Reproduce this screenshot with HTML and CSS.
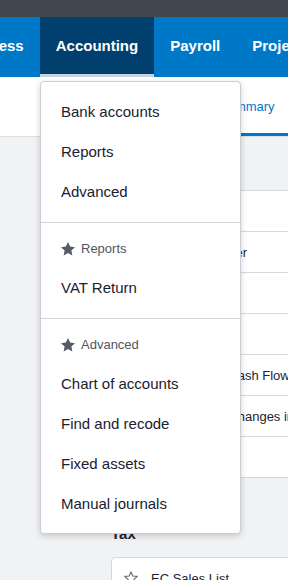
FILE: index.html
```html
<!DOCTYPE html>
<html lang="en">
<head>
<meta charset="utf-8">
<title>Accounting menu</title>
<link rel="stylesheet" href="styles.css">
</head>
<body>
<div class="topbar"></div>
<nav class="nav">
  <a class="tab tab-first">Business</a>
  <a class="tab active">Accounting</a>
  <a class="tab">Payroll</a>
  <a class="tab">Projects</a>
</nav>
<div class="subnav">
  <a class="subtab active">Summary</a>
</div>
<main class="content">
  <section class="group">
    <h2 class="group-title">Accounting</h2>
    <ul class="card">
      <li class="row"><svg class="row-star" viewBox="0 0 24 24"><path d="M12 2.8l2.7 6.2 6.8.6-5.2 4.5 1.6 6.6L12 17.2l-5.9 3.5 1.6-6.6-5.2-4.5 6.8-.6z"/></svg>Balance Sheet</li>
      <li class="row"><svg class="row-star" viewBox="0 0 24 24"><path d="M12 2.8l2.7 6.2 6.8.6-5.2 4.5 1.6 6.6L12 17.2l-5.9 3.5 1.6-6.6-5.2-4.5 6.8-.6z"/></svg>Budget Manager</li>
      <li class="row"><svg class="row-star" viewBox="0 0 24 24"><path d="M12 2.8l2.7 6.2 6.8.6-5.2 4.5 1.6 6.6L12 17.2l-5.9 3.5 1.6-6.6-5.2-4.5 6.8-.6z"/></svg>Journal Report</li>
      <li class="row"><svg class="row-star" viewBox="0 0 24 24"><path d="M12 2.8l2.7 6.2 6.8.6-5.2 4.5 1.6 6.6L12 17.2l-5.9 3.5 1.6-6.6-5.2-4.5 6.8-.6z"/></svg>Profit and Loss</li>
      <li class="row"><svg class="row-star" viewBox="0 0 24 24"><path d="M12 2.8l2.7 6.2 6.8.6-5.2 4.5 1.6 6.6L12 17.2l-5.9 3.5 1.6-6.6-5.2-4.5 6.8-.6z"/></svg>Statement of Cash Flows</li>
      <li class="row"><svg class="row-star" viewBox="0 0 24 24"><path d="M12 2.8l2.7 6.2 6.8.6-5.2 4.5 1.6 6.6L12 17.2l-5.9 3.5 1.6-6.6-5.2-4.5 6.8-.6z"/></svg>Statement of Changes in Equity</li>
      <li class="row"><svg class="row-star" viewBox="0 0 24 24"><path d="M12 2.8l2.7 6.2 6.8.6-5.2 4.5 1.6 6.6L12 17.2l-5.9 3.5 1.6-6.6-5.2-4.5 6.8-.6z"/></svg>Trial Balance</li>
    </ul>
  </section>
  <section class="group">
    <h2 class="group-title">Tax</h2>
    <ul class="card">
      <li class="row"><svg class="row-star" viewBox="0 0 24 24"><path d="M12 2.8l2.7 6.2 6.8.6-5.2 4.5 1.6 6.6L12 17.2l-5.9 3.5 1.6-6.6-5.2-4.5 6.8-.6z"/></svg>EC Sales List</li>
      <li class="row"><svg class="row-star" viewBox="0 0 24 24"><path d="M12 2.8l2.7 6.2 6.8.6-5.2 4.5 1.6 6.6L12 17.2l-5.9 3.5 1.6-6.6-5.2-4.5 6.8-.6z"/></svg>VAT Return</li>
    </ul>
  </section>
</main>

<div class="menu">
  <div class="menu-section">
    <a class="menu-item">Bank accounts</a>
    <a class="menu-item">Reports</a>
    <a class="menu-item">Advanced</a>
  </div>
  <div class="menu-section">
    <div class="menu-heading"><svg class="heading-star" viewBox="0 0 24 24"><path d="M12 1.6l3.2 6.7 7.3.9-5.4 5.1 1.4 7.3L12 18.1l-6.5 3.5 1.4-7.3-5.4-5.1 7.3-.9z"/></svg>Reports</div>
    <a class="menu-item">VAT Return</a>
  </div>
  <div class="menu-section">
    <div class="menu-heading"><svg class="heading-star" viewBox="0 0 24 24"><path d="M12 1.6l3.2 6.7 7.3.9-5.4 5.1 1.4 7.3L12 18.1l-6.5 3.5 1.4-7.3-5.4-5.1 7.3-.9z"/></svg>Advanced</div>
    <a class="menu-item">Chart of accounts</a>
    <a class="menu-item">Find and recode</a>
    <a class="menu-item">Fixed assets</a>
    <a class="menu-item">Manual journals</a>
  </div>
</div>
</body>
</html>
```

FILE: styles.css
```css
* { box-sizing: border-box; }

html, body {
  margin: 0;
  padding: 0;
}

body {
  width: 288px;
  height: 580px;
  overflow: hidden;
  background: #f1f2f4;
  font-family: "Liberation Sans", Arial, sans-serif;
  color: #1e2330;
  position: relative;
}

.topbar {
  height: 17px;
  background: #41464f;
}

.nav {
  display: flex;
  height: 60px;
  background: #0078c8;
  overflow: hidden;
  white-space: nowrap;
}

.tab {
  flex: none;
  display: flex;
  align-items: center;
  padding: 0 16px 3px;
  color: #fff;
  font-weight: bold;
  font-size: 15px;
}

.tab-first {
  margin-left: -59px;
}

.tab.active {
  background: #003f6e;
  border-bottom: 3px solid #c3d3e0;
  padding-bottom: 0;
}

.subnav {
  display: flex;
  height: 60px;
  background: #fff;
  border-bottom: 1px solid #dadde1;
  white-space: nowrap;
  overflow: hidden;
}

.subtab {
  flex: none;
  display: flex;
  align-items: center;
  margin-left: 205px;
  padding: 0 14px;
  font-size: 13px;
  color: #0078c8;
}

.subtab.active {
  border-bottom: 3px solid #0078c8;
  padding-top: 2px;
}

.content {
  padding: 20px 0 0 111px;
}

.group + .group {
  margin-top: 46px;
}

.group-title {
  margin: 0 0 13px;
  font-size: 15px;
  line-height: 20px;
  font-weight: bold;
  color: #1e2330;
}

.card {
  list-style: none;
  margin: 0;
  padding: 0;
  width: 240px;
  background: #fff;
  border: 1px solid #d3d6da;
  border-radius: 4px;
}

.row {
  display: flex;
  align-items: center;
  height: 41px;
  padding-left: 11px;
  font-size: 13px;
  color: #1e2330;
  white-space: nowrap;
  border-top: 1px solid #d6d9dd;
}

.row:first-child {
  border-top: none;
  height: 40px;
}

.row-star {
  flex: none;
  width: 16px;
  height: 16px;
  margin-right: 12px;
  fill: none;
  stroke: #5f6571;
  stroke-width: 1.6;
  stroke-linejoin: round;
}

.menu {
  position: absolute;
  top: 81px;
  left: 40px;
  width: 201px;
  background: #fff;
  border: 1px solid #cbced3;
  border-radius: 4px;
  box-shadow: 0 2px 6px rgba(0, 0, 0, 0.18);
}

.menu-section {
  display: flex;
  flex-direction: column;
  padding: 10px 0 11px;
}

.menu-section:first-child {
  padding-top: 9px;
}

.menu-section:last-child {
  padding-bottom: 10px;
}

.menu-section + .menu-section {
  border-top: 1px solid #d2d4d8;
}

.menu-item {
  display: flex;
  align-items: center;
  height: 40px;
  padding-left: 20px;
  font-size: 15px;
  color: #1a2130;
}

.menu-heading {
  display: flex;
  align-items: center;
  height: 34px;
  padding-left: 19px;
  padding-bottom: 3px;
  font-size: 13px;
  color: #505563;
}

.heading-star {
  flex: none;
  width: 16px;
  height: 16px;
  margin-right: 5px;
  fill: #575c69;
}
```
